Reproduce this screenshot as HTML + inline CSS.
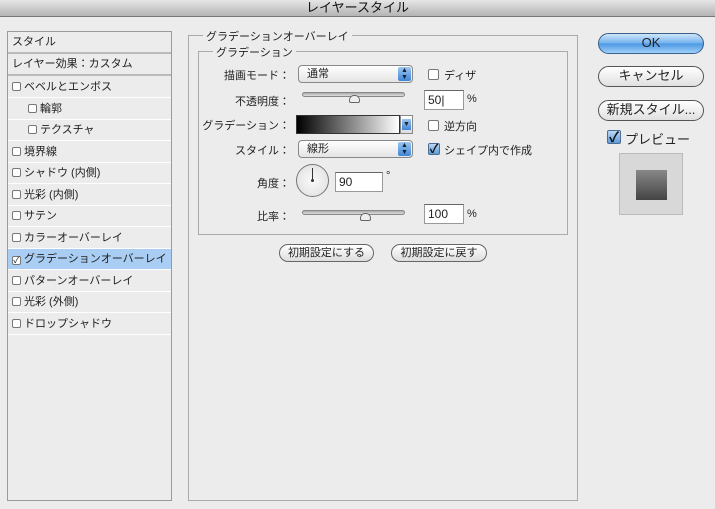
<!DOCTYPE html>
<html><head><meta charset="utf-8"><style>
*{margin:0;padding:0;box-sizing:border-box}
body{width:715px;height:509px;background:#ececec;position:relative;overflow:hidden;font-family:"Liberation Sans","Noto Sans CJK JP",sans-serif;font-size:11px;color:#222}
.a{position:absolute}
.title{left:0;top:0;width:715px;height:17px;background:linear-gradient(#e6e6e6,#b4b4b4);border-bottom:1px solid #777;text-align:center;font-size:13px;line-height:16px;color:#111}
.side{left:7px;top:31px;width:165px;height:470px;border:1px solid #9a9a9a;background:#ececec}
.row{position:absolute;left:0;width:163px;height:21px;border-bottom:1px solid #fff;line-height:20px;padding-left:4px;white-space:nowrap}
.cb{display:inline-block;width:9px;height:9px;border:1px solid #777;background:#fff;border-radius:2px;vertical-align:-1px;margin-right:3px}
.grp{border:1px solid #aaa}
.leg{background:#ececec;padding:0 3px;white-space:nowrap}
.lbl{text-align:right;width:90px;white-space:nowrap}
.sel{border:1px solid #888;border-radius:4px;background:linear-gradient(#fff,#e4e4e4);height:18px;line-height:16px;padding-left:8px}
.arr{position:absolute;right:1px;top:1px;width:13px;height:14px;background:linear-gradient(#9cc6f0,#3f86d8);border-radius:2px;color:#123;font-size:7px;text-align:center;line-height:7px}
.inp{background:#fff;border:1px solid #999;border-top-color:#666;height:20px;line-height:18px;padding-left:3px;font-size:12px}
.track{height:5px;border:1px solid #888;border-radius:3px;background:linear-gradient(#aaa,#ddd)}
.thumb{width:11px;height:8px;border:1px solid #666;border-radius:5px 5px 2px 2px;background:#eee}
.btn{border:1px solid #666;border-radius:10px;background:linear-gradient(#fff,#ddd);text-align:center;line-height:17px}
.big{border:1px solid #555;border-radius:11px;background:linear-gradient(#fff,#e0e0e0);text-align:center;line-height:18px;font-size:13px}
.chk{width:12px;height:12px;border:1px solid #4a6e96;background:linear-gradient(#bcd8f4,#5e9ad6);border-radius:2px;color:#111;font-size:12px;line-height:10px;text-align:center;font-weight:bold}
</style></head><body>
<div class="a title">レイヤースタイル</div>
<div class="a side">
<div class="row" style="top:0;border-bottom:2px solid #bbb;height:22px">スタイル</div>
<div class="row" style="top:22px;height:22px;border-bottom:2px solid #bbb">レイヤー効果：カスタム</div>
<div class="row" style="top:45px"><span class="cb"></span>ベベルとエンボス</div>
<div class="row" style="top:66.5px;padding-left:20px"><span class="cb"></span>輪郭</div>
<div class="row" style="top:88px;padding-left:20px"><span class="cb"></span>テクスチャ</div>
<div class="row" style="top:109.5px"><span class="cb"></span>境界線</div>
<div class="row" style="top:131px"><span class="cb"></span>シャドウ (内側)</div>
<div class="row" style="top:152.5px"><span class="cb"></span>光彩 (内側)</div>
<div class="row" style="top:174px"><span class="cb"></span>サテン</div>
<div class="row" style="top:195.5px"><span class="cb"></span>カラーオーバーレイ</div>
<div class="row" style="top:217px;background:#a9cdf3"><span class="cb" style="text-align:center;font-size:9px;line-height:7px">✓</span>グラデーションオーバーレイ</div>
<div class="row" style="top:238.5px"><span class="cb"></span>パターンオーバーレイ</div>
<div class="row" style="top:260px"><span class="cb"></span>光彩 (外側)</div>
<div class="row" style="top:281.5px"><span class="cb"></span>ドロップシャドウ</div>
</div>
<div class="a grp" style="left:188px;top:35px;width:390px;height:466px"></div>
<div class="a leg" style="left:203px;top:28px">グラデーションオーバーレイ</div>
<div class="a grp" style="left:198px;top:51px;width:370px;height:184px"></div>
<div class="a leg" style="left:213px;top:44px">グラデーション</div>
<div class="a lbl" style="left:200px;top:67px">描画モード：</div>
<div class="a sel" style="left:298px;top:65px;width:115px">通常<div class="arr">▲<br>▼</div></div>
<div class="a" style="left:428px;top:67px"><span class="cb" style="width:11px;height:11px;margin-right:5px"></span>ディザ</div>
<div class="a lbl" style="left:200px;top:93px">不透明度：</div>
<div class="a track" style="left:302px;top:92px;width:103px"></div>
<div class="a thumb" style="left:349px;top:95px"></div>
<div class="a inp" style="left:424px;top:90px;width:40px">50|</div>
<div class="a" style="left:467px;top:93px">%</div>
<div class="a lbl" style="left:200px;top:117px">グラデーション：</div>
<div class="a" style="left:296px;top:115px;width:104px;height:19px;border:1px solid #333;background:linear-gradient(90deg,#000,#fff)"></div>
<div class="a" style="left:400px;top:115px;width:13px;height:19px;border:1px solid #888;background:linear-gradient(#fff,#ddd)"><div style="margin:3px 0 0 1px;width:9px;height:11px;background:linear-gradient(#9cc6f0,#3f86d8);font-size:7px;text-align:center;line-height:11px">▼</div></div>
<div class="a" style="left:428px;top:118px"><span class="cb" style="width:11px;height:11px;margin-right:5px"></span>逆方向</div>
<div class="a lbl" style="left:200px;top:142px">スタイル：</div>
<div class="a sel" style="left:298px;top:140px;width:115px">線形<div class="arr">▲<br>▼</div></div>
<div class="a chk" style="left:428px;top:143px">✓</div>
<div class="a" style="left:444px;top:142px">シェイプ内で作成</div>
<div class="a lbl" style="left:200px;top:175px">角度：</div>
<div class="a" style="left:296px;top:164px;width:33px;height:33px;border:1px solid #777;border-radius:50%;background:radial-gradient(#fafafa,#ddd)"><div style="position:absolute;left:15px;top:3px;width:1px;height:12px;background:#333"></div><div style="position:absolute;left:14px;top:14px;width:3px;height:3px;background:#333;border-radius:50%"></div></div>
<div class="a inp" style="left:335px;top:172px;width:48px">90</div>
<div class="a" style="left:386px;top:170px">°</div>
<div class="a lbl" style="left:200px;top:208px">比率：</div>
<div class="a track" style="left:302px;top:210px;width:103px"></div>
<div class="a thumb" style="left:360px;top:213px"></div>
<div class="a inp" style="left:424px;top:204px;width:40px">100</div>
<div class="a" style="left:467px;top:208px">%</div>
<div class="a btn" style="left:279px;top:244px;width:95px;height:18px">初期設定にする</div>
<div class="a btn" style="left:391px;top:244px;width:96px;height:18px">初期設定に戻す</div>
<div class="a big" style="left:598px;top:33px;width:106px;height:21px;background:linear-gradient(#cfe6fb,#6fb0ec 50%,#4b97e4 51%,#9fd0f8);border-color:#3a5f8a">OK</div>
<div class="a big" style="left:598px;top:66px;width:106px;height:21px">キャンセル</div>
<div class="a big" style="left:598px;top:100px;width:106px;height:21px">新規スタイル...</div>
<div class="a chk" style="left:607px;top:130px;width:14px;height:14px;font-size:14px;line-height:12px">✓</div>
<div class="a" style="left:625px;top:129px;font-size:13px">プレビュー</div>
<div class="a" style="left:619px;top:153px;width:64px;height:62px;background:#d8d8d8;border:1px solid #bbb"><div style="position:absolute;left:16px;top:16px;width:31px;height:30px;background:linear-gradient(#888,#444)"></div></div>
</body></html>
